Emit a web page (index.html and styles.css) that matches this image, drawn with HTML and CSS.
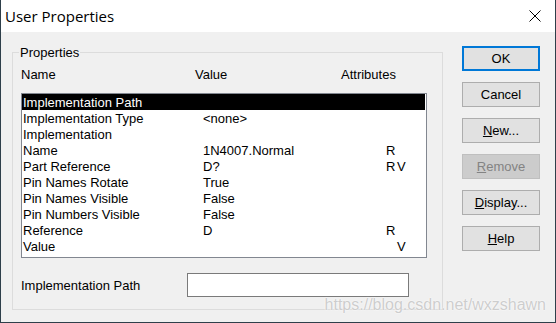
FILE: index.html
```html
<!DOCTYPE html>
<html lang="en">
<head>
    <meta charset="UTF-8">
    <title>User Properties</title>
    <link rel="stylesheet" href="styles.css">
</head>
<body>
    <div class="window">
        <div class="titlebar">
            <span class="title">User Properties</span>
            <svg class="close" width="12" height="12" viewBox="0 0 12 12">
                <path d="M0.5 0.5 L11.5 11.5 M11.5 0.5 L0.5 11.5" stroke="#000" stroke-width="1" fill="none"/>
            </svg>
        </div>
        <div class="client">
            <fieldset class="group">
                <legend><span class="legend-text">Properties</span></legend>
                <div class="list-head">
                    <span class="head-name">Name</span>
                    <span class="head-value">Value</span>
                    <span>Attributes</span>
                </div>
                <div class="list">
                    <div class="row selected"><span class="c-name">Implementation Path</span><span class="c-value"></span><span class="c-attr"></span></div>
                    <div class="row"><span class="c-name">Implementation Type</span><span class="c-value">&lt;none&gt;</span><span class="c-attr"></span></div>
                    <div class="row"><span class="c-name">Implementation</span><span class="c-value"></span><span class="c-attr"></span></div>
                    <div class="row"><span class="c-name">Name</span><span class="c-value">1N4007.Normal</span><span class="c-attr"><span class="flag">R</span></span></div>
                    <div class="row"><span class="c-name">Part Reference</span><span class="c-value">D?</span><span class="c-attr"><span class="flag">R</span><span class="flag">V</span></span></div>
                    <div class="row"><span class="c-name">Pin Names Rotate</span><span class="c-value">True</span><span class="c-attr"></span></div>
                    <div class="row"><span class="c-name">Pin Names Visible</span><span class="c-value">False</span><span class="c-attr"></span></div>
                    <div class="row"><span class="c-name">Pin Numbers Visible</span><span class="c-value">False</span><span class="c-attr"></span></div>
                    <div class="row"><span class="c-name">Reference</span><span class="c-value">D</span><span class="c-attr"><span class="flag">R</span></span></div>
                    <div class="row"><span class="c-name">Value</span><span class="c-value"></span><span class="c-attr"><span class="flag"></span><span class="flag">V</span></span></div>
                </div>
                <div class="path-row">
                    <label for="path">Implementation Path</label>
                    <input type="text" id="path" class="path-input">
                </div>
            </fieldset>
            <div class="buttons">
                <button class="btn default">OK</button>
                <button class="btn">Cancel</button>
                <button class="btn"><u>N</u>ew...</button>
                <button class="btn" disabled><u>R</u>emove</button>
                <button class="btn"><u>D</u>isplay...</button>
                <button class="btn"><u>H</u>elp</button>
            </div>
        </div>
        <div class="watermark">https://blog.csdn.net/wxzshawn</div>
    </div>
</body>
</html>
```

FILE: styles.css
```css
body {
    margin: 0;
    padding: 0;
    background-color: #2e3f4a;
    font-family: 'Liberation Sans', Arial, sans-serif;
    font-size: 13px;
    color: #000;
}
.window {
    position: relative;
    width: 556px;
    height: 323px;
    box-sizing: border-box;
    border: 1px solid #2e3f4a;
    border-top: none;
    background-color: #f0f0f0;
    overflow: hidden;
}
.titlebar {
    height: 32px;
    background-color: #fff;
    display: flex;
    align-items: center;
    justify-content: space-between;
    padding: 0 14px 0 4px;
}
.title {
    font-family: 'Open Sans', sans-serif;
    font-size: 15px;
}
.close {
    display: block;
}
.client {
    display: flex;
    align-items: flex-start;
    padding: 12px 14px 0 11px;
}
.group {
    margin: 0;
    width: 431px;
    min-width: 0;
    box-sizing: border-box;
    padding: 0 15px 12px 8px;
    border: 1px solid #dcdcdc;
}
.group legend {
    margin-left: -2px;
    padding: 0 1px;
    line-height: 16px;
}
.legend-text {
    position: relative;
    top: 1px;
}
.list-head {
    display: flex;
    height: 16px;
    line-height: 18px;
    margin-top: 6px;
}
.head-name {
    width: 174px;
}
.head-value {
    width: 146px;
}
.list {
    margin-top: 11px;
    height: 165px;
    box-sizing: border-box;
    border: 1px solid #828790;
    background-color: #fff;
}
.row {
    display: flex;
    height: 16px;
    line-height: 18px;
    white-space: nowrap;
}
.row.selected {
    background-color: #000;
    color: #fff;
    margin-right: 1px;
    line-height: 17px;
}
.c-name {
    width: 180px;
    padding-left: 1px;
}
.c-value {
    width: 183px;
}
.c-attr {
    display: flex;
}
.flag {
    width: 11px;
}
.path-row {
    display: flex;
    align-items: center;
    margin-top: 15px;
    height: 24px;
}
.path-row label {
    width: 166px;
}
.path-input {
    width: 222px;
    height: 24px;
    box-sizing: border-box;
    margin: 0;
    border: 1px solid #7a7a7a;
    background-color: #fff;
}
.buttons {
    display: flex;
    flex-direction: column;
    gap: 11px;
    margin-left: 19px;
    margin-top: 2px;
}
.btn {
    width: 78px;
    height: 25px;
    box-sizing: border-box;
    padding: 0;
    border: 1px solid #adadad;
    background-color: #e1e1e1;
    font-family: 'Liberation Sans', Arial, sans-serif;
    font-size: 13px;
    color: #000;
}
.btn.default {
    border: 2px solid #0078d7;
}
.btn:disabled {
    background-color: #cccccc;
    border-color: #bfbfbf;
    color: #838383;
}
.watermark {
    position: absolute;
    right: 9px;
    bottom: 8px;
    font-family: 'Liberation Sans', Arial, sans-serif;
    font-size: 16px;
    color: #cdcdcd;
    text-shadow: 0 0 2px #fff, 0 0 1px #fff;
}
```
